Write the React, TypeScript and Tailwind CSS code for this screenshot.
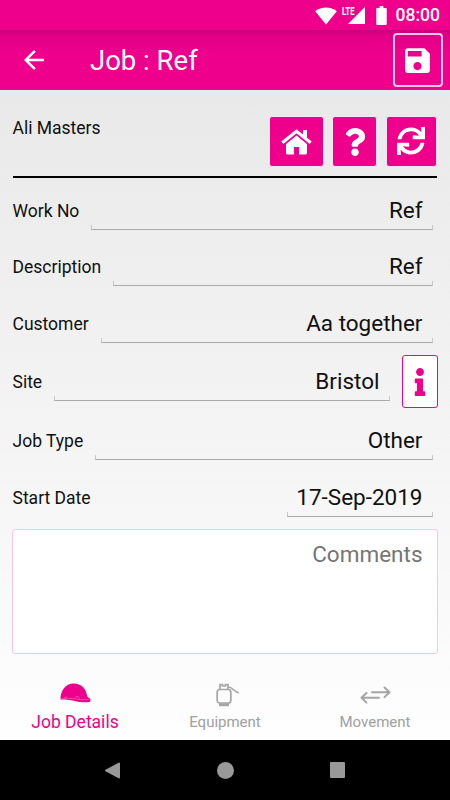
import type { ReactNode } from 'react'
import { MdArrowBack, MdSave } from 'react-icons/md'
import { FaQuestion, FaInfo, FaSync } from 'react-icons/fa'

function StatusBar() {
    return (
        <div className="h-[30px] bg-[#ee008c] flex items-center justify-end pr-[10px] pt-[2px] text-white">
            <svg className="mr-[5px] w-[22px] h-[18px] -mt-px" viewBox="0 0 22 18" fill="currentColor">
                <path d="M11 17.5.2 4.2C3.2 1.7 7 .5 11 .5s7.800 1.200 10.800 3.700z" />
            </svg>
            <svg className="w-[24px] h-[19px] -mt-px" viewBox="0 0 24 19" fill="currentColor">
                <path d="M23 1V18H6z" />
                <text x="0" y="8.500" fontSize="10.500" fontWeight="800" fontFamily="Roboto, sans-serif" textLength="12.500" lengthAdjust="spacingAndGlyphs" stroke="#ee008c" strokeWidth="1" paintOrder="stroke">LTE</text>
            </svg>
            <svg className="ml-[10px] w-[11px] h-[19px] -mt-px" viewBox="0 0 11 20" fill="currentColor">
                <path d="M3.500 0h4v2H10a1 1 0 0 1 1 1v16a1 1 0 0 1-1 1H1a1 1 0 0 1-1-1V3a1 1 0 0 1 1-1h2.500z" />
            </svg>
            <span className="ml-[9px] text-[17.5px] leading-none font-medium">08:00</span>
        </div>
    )
}

function AppBar() {
    return (
        <header className="h-[60px] bg-linear-to-b from-[#cb007b] via-[#e20087] via-10% to-[#ee008c] to-40% flex items-center pl-[19px] pr-[7px] text-white">
            <MdArrowBack className="w-[30px] h-[30px]" />
            <h1 className="ml-[41px] pt-[2px] text-[27.5px] leading-none">Job : Ref</h1>
            <button className="ml-auto w-[50px] h-[54px] border-2 border-[#ffc4e4] rounded-[4px] flex items-center justify-center">
                <MdSave className="w-[33px] h-[33px] -ml-px" />
            </button>
        </header>
    )
}

// Underlined input with small ticks at both ends
function Field({ value, className = 'flex-1' }: { value: string; className?: string }) {
    return (
        <div className={`h-[38px] flex flex-col ${className}`}>
            <div className="h-[33px] pt-[3px] pr-[10.5px] flex items-center justify-end text-[22.5px] leading-7 whitespace-nowrap">
                {value}
            </div>
            <div className="h-[5px] border-x border-b border-x-[#c8c8c8] border-b-[#aaaaaa]" />
        </div>
    )
}

function Row({ label, className, children }: { label: string; className: string; children: ReactNode }) {
    return (
        <div className={`flex items-end pl-[12.5px] ${className}`}>
            <div className="h-[38px] flex items-center text-[17.5px] leading-6 whitespace-nowrap mr-[12px]">{label}</div>
            {children}
        </div>
    )
}

function HomeIcon() {
    return (
        <svg className="w-[31px] h-[26px]" viewBox="0 0 31 26" fill="currentColor">
            <path d="M15.500 6.500 26 15v9a1.500 1.500 0 0 1-1.500 1.500H18V18h-5v7.500H6.500A1.500 1.500 0 0 1 5 24v-9z" />
            <path d="M1.300 14 15.500 2.400 29.700 14" fill="none" stroke="#ee008c" strokeWidth="5.500" />
            <path d="M1.300 13.800 15.500 2.200 29.700 13.800" fill="none" stroke="currentColor" strokeWidth="3.200" />
            <path d="M22 1h4v9l-4-3.300z" />
        </svg>
    )
}

function HelmetIcon() {
    return (
        <svg className="w-[31px] h-5" viewBox="0 0 31 20">
            <path fill="#ee008c" d="M.5 16.500C.3 8 5.500 .5 13.500 .5c8 0 12.500 5 13.800 13l3 2.500c.5 1.200.2 2.500-.8 2.900-4 .8-9.500.5-13.500-.6-5-1.200-10-1.900-15.500-1.800z" />
            <path fill="none" stroke="#f58cc8" strokeWidth=".5" d="M1.500 15.500c5-.5 10-.2 15 .6 4 .7 8 .7 12 .4M14.500 15.300l1.500-1.600h2.500l1 2.200M5 15v-1h2" />
        </svg>
    )
}

function CylinderIcon() {
    return (
        <svg className="w-6 h-6" viewBox="0 0 24 24" fill="none" stroke="#a5a5a5" strokeWidth="1.700">
            <rect x="1.200" y="6.500" width="13.600" height="13.500" rx="2.500" />
            <path d="M4 6.500V1.500h2.500V3h3V1.500H12v5M12 4c5-.3 5 4.700 10.800 5.800" />
            <path d="M3 21.700h10" strokeWidth="3" />
        </svg>
    )
}

function TransferIcon() {
    return (
        <svg className="w-[31px] h-[18px]" viewBox="0 0 31 18" fill="none" stroke="#a5a5a5" strokeWidth="2" strokeLinecap="round" strokeLinejoin="round">
            <path d="M12 6.300h17.500M24.500 1.500l5 4.800-5 4.800M19 11.800H1.500M6.500 7l-5 4.800 5 4.800" />
        </svg>
    )
}

export default function App() {
    const actionClass = 'h-[51px] bg-[#ee008c] border border-[#fde5f3] rounded-[3px] flex items-center justify-center text-white'

    return (
        <div className="w-[450px] h-[800px] flex flex-col overflow-hidden font-['Roboto',sans-serif] text-[#101010]">
            <StatusBar />
            <AppBar />

            <div className="flex-1 flex flex-col bg-linear-to-b from-[#e9e9e9] to-[#fefefe]">
                {/* Customer name and actions */}
                <div className="ml-[12.5px] mr-[13px] h-[88px] border-b-[2.5px] border-black flex">
                    <div className="pt-[26px] text-[17.5px] leading-6">Ali Masters</div>
                    <div className="ml-auto pt-[26px] flex">
                        <button className={`w-[55px] mr-[8px] ${actionClass}`}><HomeIcon /></button>
                        <button className={`w-[45px] mr-[9px] ${actionClass}`}><FaQuestion className="w-7 h-7" /></button>
                        <button className={`w-[51px] ${actionClass}`}><FaSync className="w-7 h-7 -ml-px -mt-px" /></button>
                    </div>
                </div>

                <Row label="Work No" className="h-[52px] pr-[17px]"><Field value="Ref" /></Row>
                <Row label="Description" className="h-[56px] pr-[17px]"><Field value="Ref" /></Row>
                <Row label="Customer" className="h-[57px] pr-[17px]"><Field value="Aa together" /></Row>
                <Row label="Site" className="h-[58px] pr-[12.5px]">
                    <Field value="Bristol" />
                    <button className="ml-[12px] -mb-[7px] w-[35.5px] h-[53px] bg-white border border-[#ee008c] rounded-[3px] flex items-center justify-center text-[#ee008c]">
                        <FaInfo className="w-7 h-7" />
                    </button>
                </Row>
                <Row label="Job Type" className="h-[59px] pr-[17px]"><Field value="Other" /></Row>
                <Row label="Start Date" className="h-[57px] pr-[17px]"><Field value="17-Sep-2019" className="ml-auto w-[146px]" /></Row>

                <div className="mt-[12px] mx-[12px] h-[125px] bg-white border border-[#f6c8e0] rounded-[3px] pt-[10px] pr-[14.5px] text-right text-[22.5px] leading-7 text-[#757575]">
                    Comments
                </div>

                {/* Bottom tabs */}
                <nav className="mt-auto h-[70px] grid grid-cols-3">
                    <div className="flex flex-col items-center pt-[13px]">
                        <HelmetIcon />
                        <span className="mt-[9px] text-[17.5px] leading-5 text-[#ee008c]">Job Details</span>
                    </div>
                    <div className="flex flex-col items-center pt-[13px]">
                        <div className="ml-[5px]"><CylinderIcon /></div>
                        <span className="mt-[5px] text-[15px] leading-5 text-[#a0a0a0]">Equipment</span>
                    </div>
                    <div className="flex flex-col items-center pt-[16px]">
                        <TransferIcon />
                        <span className="mt-[8px] text-[15px] leading-5 text-[#a0a0a0]">Movement</span>
                    </div>
                </nav>
            </div>

            {/* System navigation */}
            <div className="h-[60px] bg-black flex items-center pl-[105px]">
                <svg className="w-[15px] h-[17px]" viewBox="0 0 15 17" fill="#999999">
                    <path d="M14 .5q1 0 1 1v14q0 1-1 1L.5 9.200q-1-.7 0-1.400z" />
                </svg>
                <div className="ml-[97px] w-[17px] h-[17px] rounded-full bg-[#999999]" />
                <div className="ml-[96px] w-[15px] h-4 rounded-[1px] bg-[#999999]" />
            </div>
        </div>
    )
}
